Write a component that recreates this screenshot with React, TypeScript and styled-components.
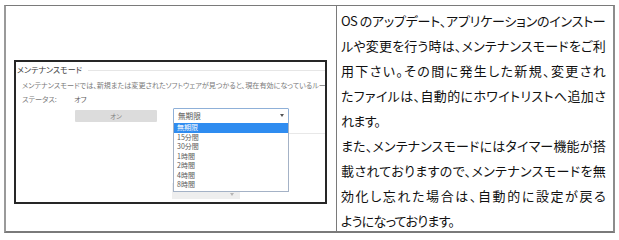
import React from "react";
import styled, { createGlobalStyle } from "styled-components";

const Global = createGlobalStyle`
  html, body { margin: 0; padding: 0; background: #ffffff; }
  body { font-family: "Noto Sans CJK JP", "Noto Sans", sans-serif; }
`;

const Page = styled.div`
  padding: 5px 0 0 4px;
`;

const Table = styled.div`
  display: grid;
  grid-template-columns: 331px 276px;
  width: 611px;
  height: 228px;
  box-sizing: border-box;
  border-top: 1px solid #7a7a7a;
  border-left: 2px solid #9a9a9a;
  border-right: 2px solid #8c8c8c;
  border-bottom: 2px solid #7a7a7a;
`;

const LeftCell = styled.div`
  border-right: 1px solid #7a7a7a;
  padding: 54px 0 0 8px;
`;

const Shot = styled.div`
  position: relative;
  width: 313px;
  height: 144px;
  box-sizing: border-box;
  border: 2px solid #262626;
  background: #fff;
  overflow: hidden;
  display: flex;
  flex-direction: column;
  font-feature-settings: "palt";
`;

const TitleRow = styled.div`
  display: flex;
  align-items: center;
  gap: 6px;
  height: 10px;
  margin-top: 3px;
  padding-left: 1px;
`;

const Title = styled.span`
  font-size: 8px;
  line-height: 10px;
  color: #3c3c3c;
  white-space: nowrap;
`;

const Rule = styled.div`
  flex: 1;
  height: 1px;
  background: #e6e6e6;
`;

const Desc = styled.div`
  margin-top: 5px;
  padding-left: 6px;
  font-size: 7.1px;
  line-height: 10px;
  color: #7a7a7a;
  white-space: nowrap;
`;

const StatusRow = styled.div`
  display: flex;
  margin-top: 4px;
  padding-left: 6px;
  height: 10px;
  font-size: 7.2px;
  line-height: 10px;
`;

const StatusLabel = styled.span`
  width: 52px;
  color: #808080;
`;

const StatusValue = styled.span`
  color: #606060;
`;

const ControlRow = styled.div`
  display: flex;
  align-items: flex-start;
  gap: 16px;
  margin-top: 4px;
  padding-left: 59px;
`;

const ToggleButton = styled.div`
  margin-top: 2px;
  width: 82px;
  height: 12px;
  background: #dcdcdc;
  border-radius: 1px;
  display: flex;
  align-items: center;
  justify-content: center;
  font-size: 6.5px;
  color: #808080;
`;

const SelectBox = styled.div`
  position: relative;
  width: 116px;
  height: 15px;
  box-sizing: border-box;
  border: 1px solid #8fb0d8;
  border-radius: 1px;
  display: flex;
  align-items: center;
  justify-content: space-between;
  padding: 0 4px 0 4px;
  font-size: 7.6px;
  color: #555;
  background: #fff;
`;

const Caret = styled.span<{ $color?: string }>`
  width: 0;
  height: 0;
  border-left: 2.5px solid transparent;
  border-right: 2.5px solid transparent;
  border-top: 3px solid ${(p) => p.$color || "#555"};
`;

const Menu = styled.div`
  position: absolute;
  top: 100%;
  left: -1px;
  width: 116px;
  box-sizing: border-box;
  border: 1px solid #a4b2c6;
  border-top: none;
  background: #fff;
  padding: 1px 0 1px;
  z-index: 2;
`;

const MenuItem = styled.div<{ $active?: boolean }>`
  height: 9.5px;
  line-height: 9.5px;
  padding-left: 3px;
  font-size: 7px;
  color: ${(p) => (p.$active ? "#ffffff" : "#5a5a5a")};
  background: ${(p) => (p.$active ? "#2f8cf0" : "transparent")};
`;

const UnderRule = styled.div`
  margin-top: 10px;
  margin-left: 157px;
  height: 0;
  border-top: 1px solid #e8e8e8;
`;

const UnderSelect = styled.div`
  margin-top: 49px;
  margin-left: 156px;
  width: 68px;
  height: 16px;
  background: #eeeeee;
  display: flex;
  align-items: flex-end;
  justify-content: flex-end;
  padding: 0 6px 3px 0;
  box-sizing: border-box;
`;

const RightCell = styled.div`
  padding: 2px 8px 0 4px;
`;

const Line = styled.div<{ $justify?: boolean }>`
  font-size: 13px;
  line-height: 25px;
  height: 25px;
  color: #111;
  white-space: nowrap;
  letter-spacing: -0.7px;
  font-feature-settings: "palt";
  text-align: ${(p) => (p.$justify ? "justify" : "left")};
  text-align-last: ${(p) => (p.$justify ? "justify" : "left")};
  text-justify: inter-character;
`;

const options = ["無期限", "15分間", "30分間", "1時間", "2時間", "4時間", "8時間"];

const lines: { text: string; justify: boolean }[] = [
  { text: "OS のアップデート、アプリケーションのインストー", justify: true },
  { text: "ルや変更を行う時は、メンテナンスモードをご利", justify: true },
  { text: "用下さい。その間に発生した新規、変更され", justify: true },
  { text: "たファイルは、自動的にホワイトリストへ追加さ", justify: true },
  { text: "れます。", justify: false },
  { text: "また、メンテナンスモードにはタイマー機能が搭", justify: true },
  { text: "載されておりますので、メンテナンスモードを無", justify: true },
  { text: "効化し忘れた場合は、自動的に設定が戻る", justify: true },
  { text: "ようになっております。", justify: false },
];

export default function App() {
  return (
    <>
      <Global />
      <Page>
        <Table>
          <LeftCell>
            <Shot>
              <TitleRow>
                <Title>メンテナンスモード</Title>
                <Rule />
              </TitleRow>
              <Desc>
                メンテナンスモードでは、新規または変更されたソフトウェアが見つかると、現在有効になっているルー
              </Desc>
              <StatusRow>
                <StatusLabel>ステータス:</StatusLabel>
                <StatusValue>オフ</StatusValue>
              </StatusRow>
              <ControlRow>
                <ToggleButton>オン</ToggleButton>
                <SelectBox>
                  <span>無期限</span>
                  <Caret />
                  <Menu>
                    {options.map((o, i) => (
                      <MenuItem key={o} $active={i === 0}>
                        {o}
                      </MenuItem>
                    ))}
                  </Menu>
                </SelectBox>
              </ControlRow>
              <UnderRule />
              <UnderSelect>
                <Caret $color="#b5b5b5" />
              </UnderSelect>
            </Shot>
          </LeftCell>
          <RightCell>
            {lines.map((l, i) => (
              <Line key={i} $justify={l.justify}>
                {l.text}
              </Line>
            ))}
          </RightCell>
        </Table>
      </Page>
    </>
  );
}
